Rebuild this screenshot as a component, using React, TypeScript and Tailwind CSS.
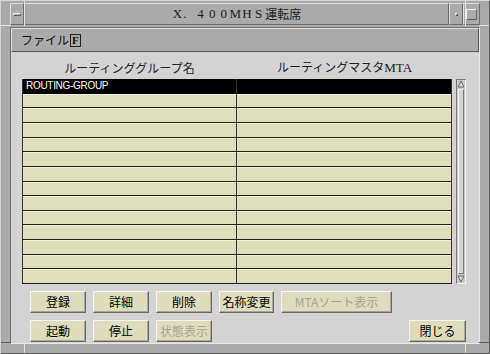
const jp = "font-['Noto_Sans_CJK_JP',sans-serif]";

const titleLatin = ["X", ".", "4", "0", "0", "M", "H", "S"];

const buttonsTop = [
  { label: "登録", w: "w-[56px]" },
  { label: "詳細", w: "w-[56px]" },
  { label: "削除", w: "w-[56px]" },
  { label: "名称変更", w: "w-[55px]" },
  { label: "MTAソート表示", w: "w-[111px]", disabled: true },
];

const buttonsBottom = [
  { label: "起動", w: "w-[56px]" },
  { label: "停止", w: "w-[56px]" },
  { label: "状態表示", w: "w-[56px]", disabled: true },
];

const rows = [
  { name: "ROUTING-GROUP", mta: "", selected: true },
  ...Array.from({ length: 13 }, () => ({ name: "", mta: "", selected: false })),
];

function MotifButton({ label, w, disabled }: { label: string; w: string; disabled?: boolean }) {
  return (
    <button
      className={[
        "flex h-[22px] items-center justify-center border border-t-[#f4f4f0] border-l-[#f4f4f0] border-b-[#6a6a60] border-r-[#6a6a60] bg-[#dedcbc] text-[12px] leading-none shadow-[inset_-1px_-1px_0_#a8a796]",
        w,
        jp,
        disabled ? "text-[#a4a39a]" : "text-black",
      ].join(" ")}
    >
      {label}
    </button>
  );
}

export default function App() {
  return (
    <div className="relative flex h-[354px] w-[490px] flex-col border border-t-[#d6d6d6] border-l-[#d6d6d6] border-b-[#5c5c5c] border-r-[#5c5c5c] bg-[#aaaaaa] px-[9px] pb-[9px] pt-[2px]">
      {/* resize corner marks */}
      <div className="absolute left-[23px] top-0 h-[25px] w-px bg-[#e6e6e6]" />
      <div className="absolute left-0 top-[24px] h-px w-[10px] bg-[#e6e6e6]" />
      <div className="absolute right-[23px] top-0 h-[25px] w-px bg-[#e6e6e6]" />
      <div className="absolute right-0 top-[24px] h-px w-[10px] bg-[#e6e6e6]" />
      <div className="absolute bottom-0 left-[23px] h-[10px] w-px bg-[#e6e6e6]" />
      <div className="absolute bottom-[10px] left-0 h-px w-[10px] bg-[#5c5c5c]" />
      <div className="absolute bottom-0 right-[23px] h-[10px] w-px bg-[#e6e6e6]" />
      <div className="absolute bottom-[10px] right-0 h-px w-[10px] bg-[#5c5c5c]" />

      {/* title bar */}
      <div className="flex h-[22px] shrink-0">
        <div className="flex w-[14px] items-center justify-center border border-t-[#dcdcdc] border-l-[#dcdcdc] border-b-[#6e6e6e] border-r-[#6e6e6e]">
          <div className="h-[3px] w-[8px] border border-t-[#eeeeee] border-l-[#eeeeee] border-b-[#666] border-r-[#666]" />
        </div>
        <div className="flex flex-1 items-center justify-center border border-t-[#dcdcdc] border-l-[#dcdcdc] border-b-[#6e6e6e] border-r-[#6e6e6e] text-[13px] text-[#222]">
          <div className="flex items-center">
            {titleLatin.map((c, i) => (
              <span
                key={i}
                className={[
                  "inline-block w-[11.6px] font-['Liberation_Serif',serif]",
                  c === "." ? "text-left" : "text-center",
                ].join(" ")}
              >
                {c}
              </span>
            ))}
            <span className={`ml-[1px] text-[12px] ${jp}`}>運転席</span>
          </div>
        </div>
        <div className="flex w-[14px] items-center justify-center border border-t-[#dcdcdc] border-l-[#dcdcdc] border-b-[#6e6e6e] border-r-[#6e6e6e]">
          <div className="h-[3px] w-[3px] border border-t-[#eee] border-l-[#eee] border-b-[#555] border-r-[#555]" />
        </div>
        <div className="flex w-[17px] items-center justify-center border border-t-[#dcdcdc] border-l-[#dcdcdc] border-b-[#6e6e6e] border-r-[#6e6e6e]">
          <div className="h-[11px] w-[11px] border border-t-[#eee] border-l-[#eee] border-b-[#666] border-r-[#666]" />
        </div>
      </div>

      {/* main panel */}
      <div className="mt-[2px] flex flex-1 flex-col border border-t-[#6e6e6e] border-l-[#6e6e6e] border-b-[#e8e8e8] border-r-[#e8e8e8]">
        {/* menu bar */}
        <div className="flex h-[24px] shrink-0 items-center border border-t-[#dedede] border-l-[#dedede] border-b-[#5a5a5a] border-r-[#5a5a5a] bg-[#aaaaaa] pl-[9px]">
          <span className={`text-[12px] text-[#111] ${jp}`}>ファイル</span>
          <span className="ml-[1px] flex h-[13px] items-center border border-[#222] px-[1px] font-['Liberation_Serif',serif] text-[11px] font-bold leading-none text-[#111]">
            F
          </span>
        </div>

        {/* content */}
        <div className="flex flex-1 flex-col bg-[#d3d3d3] pl-[11px] pr-[13px] pt-[6px]">
          <div className="flex">
            <div className="w-[430px]">
              {/* headers */}
              <div className={`grid h-[20px] grid-cols-2 items-center text-[12px] text-[#222] ${jp}`}>
                <div className="text-center">ルーティンググループ名</div>
                <div className="text-center">
                  ルーティングマスタ<span className="font-['Liberation_Serif',serif] text-[13px]">MTA</span>
                </div>
              </div>
              {/* table */}
              <div className="mt-[1px] grid h-[205px] grid-rows-[repeat(14,1fr)] overflow-hidden border-l border-r border-[#333] bg-[#dfdebc]">
                {rows.map((r, i) => (
                  <div
                    key={i}
                    className={[
                      "grid grid-cols-2 border-b",
                      r.selected
                        ? "border-[#000] bg-black text-white"
                        : "border-[#1e1e1e] bg-[#dfdebc] shadow-[inset_0_1px_0_#f3f2d6]",
                    ].join(" ")}
                  >
                    <div className="flex items-center border-r border-[#333] pl-[3px] font-['Liberation_Sans',sans-serif] text-[10px] leading-none tracking-[-0.3px]">
                      {r.name}
                    </div>
                    <div className="flex items-center pl-[3px] text-[10px]">{r.mta}</div>
                  </div>
                ))}
              </div>
            </div>
            {/* scrollbar */}
            <div className="ml-[4px] mt-[21px] flex h-[205px] w-[10px] flex-col border border-t-[#777] border-l-[#777] border-b-[#f2f2f2] border-r-[#f2f2f2] bg-[#c8c8c8]">
              <svg width="8" height="8" viewBox="0 0 8 8" className="shrink-0">
                <path d="M1 7 L4 1 L7 7 Z" fill="#d8d8d8" stroke="#666" strokeWidth="1" />
              </svg>
              <div className="mx-auto my-[1px] w-[6px] flex-1 border border-t-[#f0f0f0] border-l-[#f0f0f0] border-b-[#777] border-r-[#777] bg-[#d3d3d3]" />
              <svg width="8" height="8" viewBox="0 0 8 8" className="shrink-0">
                <path d="M1 1 L4 7 L7 1 Z" fill="#d8d8d8" stroke="#666" strokeWidth="1" />
              </svg>
            </div>
          </div>

          {/* buttons */}
          <div className="mt-[7px] flex gap-[7px] pl-[8px]">
            {buttonsTop.map((b) => (
              <MotifButton key={b.label} {...b} />
            ))}
          </div>
          <div className="mt-[7px] flex gap-[7px] pl-[8px]">
            {buttonsBottom.map((b) => (
              <MotifButton key={b.label} {...b} />
            ))}
            <div className="flex-1" />
            <MotifButton label="閉じる" w="w-[57px]" />
          </div>
        </div>
      </div>
    </div>
  );
}
